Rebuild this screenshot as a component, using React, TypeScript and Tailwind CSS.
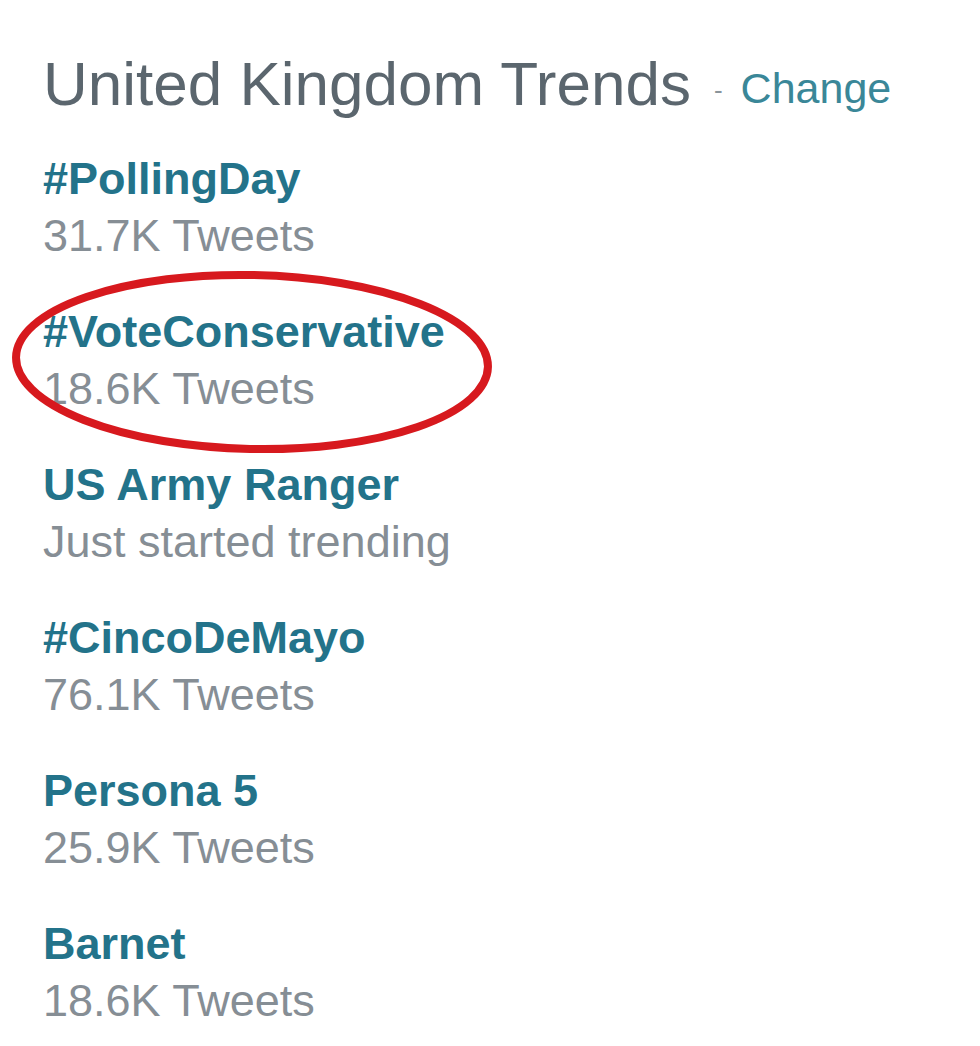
const TRENDS = [
  { name: '#PollingDay', meta: '31.7K Tweets' },
  { name: '#VoteConservative', meta: '18.6K Tweets' },
  { name: 'US Army Ranger', meta: 'Just started trending' },
  { name: '#CincoDeMayo', meta: '76.1K Tweets' },
  { name: 'Persona 5', meta: '25.9K Tweets' },
  { name: 'Barnet', meta: '18.6K Tweets' },
]

function App() {
  return (
    <div className="relative min-h-screen bg-white font-['Liberation_Sans',Arial,sans-serif]">
      <div className="pt-[49px] pl-[43px]">
        <h1 className="whitespace-nowrap leading-[70px]">
          <span className="text-[62px] text-[#5b666e]">United Kingdom Trends</span>
          <span className="ml-[23px] text-[26px] text-[#8a949b] align-[6px]">-</span>
          <span className="ml-[18px] text-[43px] text-[#3a8798] align-[2px]">Change</span>
        </h1>

        <ul className="mt-[15px] flex flex-col gap-[39px]">
          {TRENDS.map((trend) => (
            <li key={trend.name} className="text-[45px] leading-[57px] whitespace-nowrap">
              <div className="font-bold text-[#23738a]">{trend.name}</div>
              <div className="text-[#868e95]">{trend.meta}</div>
            </li>
          ))}
        </ul>
      </div>

      {/* hand-drawn red circle around the second trend */}
      <svg
        className="absolute left-0 top-0 pointer-events-none"
        width="520"
        height="480"
        viewBox="0 0 520 480"
      >
        <ellipse
          cx="252"
          cy="362"
          rx="236"
          ry="87"
          fill="none"
          stroke="#d7191e"
          strokeWidth="8"
          transform="rotate(1.2 252 362)"
        />
      </svg>
    </div>
  )
}

export default App
